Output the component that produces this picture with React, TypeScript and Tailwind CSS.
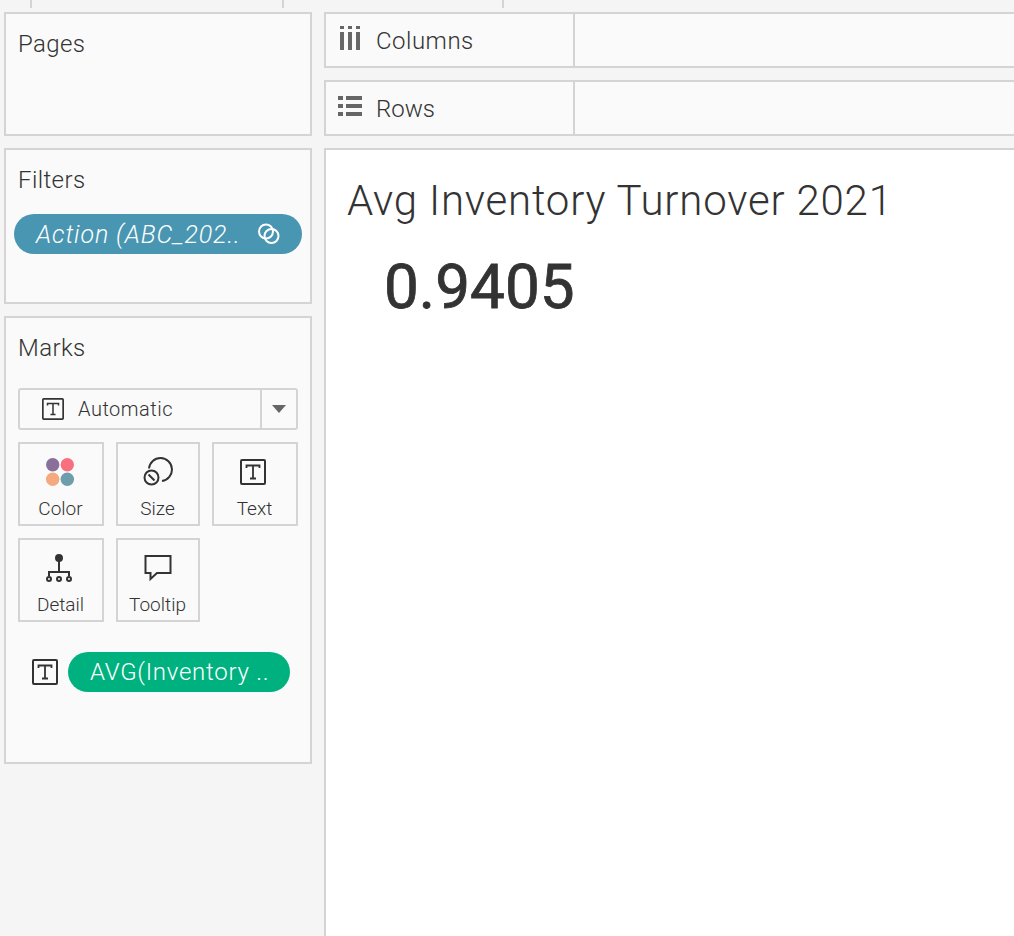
import React from 'react';

const sans = "font-['Roboto','Open_Sans',sans-serif]";

const TextIcon = ({ size = 26, className = '' }: { size?: number; className?: string }) => (
  <svg width={size} height={size} viewBox="0 0 26 26" fill="none" className={className}>
    <rect x="1" y="1" width="24" height="24" rx="1" stroke="#333" strokeWidth="2" />
    <path d="M6.500 9V6.500h13V9M13 7v12.500M10 19.500h6" stroke="#333" strokeWidth="1.800" />
  </svg>
);

const MarkButton = ({ label, icon }: { label: string; icon: React.ReactNode }) => (
  <div className="flex h-[84px] w-full flex-col items-center border-2 border-[#d4d4d4] bg-[#fafafa]">
    <div className="flex h-[52px] w-full items-center justify-center pt-[4px]">{icon}</div>
    <span className="-ml-[1px] mt-[1px] text-[19px] font-light leading-[24px] text-[#333]">{label}</span>
  </div>
);

export default function App() {
  return (
    <div className={`${sans} h-[936px] w-[1014px] overflow-hidden bg-[#f5f5f5] text-[#333]`}>
      <div className="flex h-[12px] items-start">
        <div className="ml-[30px] h-[8px] w-[2px] bg-[#d4d4d4]" />
        <div className="ml-[250px] h-[8px] w-[2px] bg-[#d4d4d4]" />
        <div className="ml-[218px] h-[8px] w-[2px] bg-[#d4d4d4]" />
      </div>

      <div className="flex gap-[12px] pl-[4px]">
        <div className="flex w-[308px] flex-col gap-[12px]">
          <section className="h-[124px] border-2 border-[#d4d4d4] bg-[#fafafa] pl-[12px] pt-[14px] text-[24px] font-light leading-[32px] tracking-[0.4px]">
            Pages
          </section>

          <section className="h-[156px] border-2 border-[#d4d4d4] bg-[#fafafa] pt-[14px]">
            <div className="pl-[12px] text-[24px] font-light leading-[32px] tracking-[0.4px]">Filters</div>
            <div className="ml-[8px] mt-[18px] flex h-[40px] w-[288px] items-center rounded-full bg-[#4996b2] pl-[22px] text-white">
              <span className="text-[25px] font-light italic leading-none tracking-[0.88px]">Action (ABC_202..</span>
              <svg width="24" height="24" viewBox="0 0 24 24" fill="none" className="ml-auto mr-[21px]">
                <circle cx="9" cy="9.500" r="7" stroke="#fff" strokeWidth="2" />
                <circle cx="14.500" cy="14" r="7" stroke="#fff" strokeWidth="2" />
              </svg>
            </div>
          </section>

          <section className="h-[448px] border-2 border-[#d4d4d4] bg-[#fafafa] pt-[14px]">
            <div className="pl-[12px] text-[24px] font-light leading-[32px] tracking-[0.4px]">Marks</div>
            <div className="ml-[12px] mt-[24px] flex h-[42px] w-[280px] items-center rounded-[3px] border-2 border-[#d4d4d4]">
              <TextIcon size={22} className="ml-[22px]" />
              <span className="ml-[14px] flex-1 text-[20px] font-light leading-none tracking-[0.5px]">Automatic</span>
              <div className="flex h-full w-[36px] items-center justify-center border-l-2 border-[#d4d4d4]">
                <div className="h-0 w-0 border-x-[7px] border-t-[8px] border-x-transparent border-t-[#666]" />
              </div>
            </div>

            <div className="ml-[12px] mt-[12px] grid w-[280px] grid-cols-[86px_84px_86px] gap-[12px]">
              <MarkButton
                label="Color"
                icon={
                  <svg width="30" height="30" viewBox="0 0 30 30" className="-ml-[2px]">
                    <circle cx="7.700" cy="7.700" r="6.700" fill="#8b6f9b" />
                    <circle cx="22.300" cy="7.700" r="6.700" fill="#f8707f" />
                    <circle cx="7.700" cy="22.300" r="6.700" fill="#f4a97f" />
                    <circle cx="22.300" cy="22.300" r="6.700" fill="#6e9dab" />
                  </svg>
                }
              />
              <MarkButton
                label="Size"
                icon={
                  <svg width="30" height="30" viewBox="0 0 30 30" fill="none" stroke="#333" strokeWidth="2">
                    <path d="M6 11.500A11.500 11.500 0 1 1 19 24" />
                    <circle cx="8.500" cy="20.500" r="7" />
                    <path d="M5.500 17.500l6 6" />
                  </svg>
                }
              />
              <MarkButton label="Text" icon={<TextIcon className="-ml-[4px]" />} />
              <MarkButton
                label="Detail"
                icon={
                  <svg width="28" height="30" viewBox="0 0 28 30" fill="none" stroke="#333" strokeWidth="2" className="-ml-[4px] mt-[2px]">
                    <circle cx="14" cy="4" r="3" fill="#333" />
                    <path d="M14 7v11M4 22v-4h20v4" />
                    <circle cx="4" cy="25" r="2" />
                    <circle cx="14" cy="25" r="2" />
                    <circle cx="24" cy="25" r="2" />
                  </svg>
                }
              />
              <MarkButton
                label="Tooltip"
                icon={
                  <svg width="30" height="28" viewBox="0 0 30 28" fill="none" stroke="#333" strokeWidth="2">
                    <path d="M2.500 2h25v17H14l-6.500 6v-6h-5z" />
                  </svg>
                }
              />
            </div>

            <div className="ml-[26px] mt-[30px] flex items-center gap-[10px]">
              <TextIcon />
              <div className="flex h-[40px] w-[222px] items-center rounded-full bg-[#00b180] pl-[22px] text-[24px] font-light leading-none tracking-[0.75px] text-white">
                AVG(Inventory ..
              </div>
            </div>
          </section>
        </div>

        <div className="flex flex-1 flex-col gap-[12px]">
          <div className="flex h-[56px] border-y-2 border-l-2 border-[#d4d4d4] bg-[#fafafa]">
            <div className="flex w-[249px] items-center border-r-2 border-[#d4d4d4] pl-[14px]">
              <svg width="20" height="24" viewBox="0 0 20 24" fill="#666" className="-mt-[4px]">
                <path d="M0 0h4v3H0zM8 0h4v3H8zM16 0h4v3h-4zM0 6h4v18H0zM8 6h4v18H8zM16 6h4v18h-4z" />
              </svg>
              <span className="ml-[16px] mt-[2px] text-[24px] font-light leading-none tracking-[0.5px]">Columns</span>
            </div>
          </div>
          <div className="flex h-[56px] border-y-2 border-l-2 border-[#d4d4d4] bg-[#fafafa]">
            <div className="flex w-[249px] items-center border-r-2 border-[#d4d4d4] pl-[12px]">
              <svg width="24" height="20" viewBox="0 0 24 20" fill="#666" className="-mt-[4px]">
                <path d="M0 0h5v4H0zM8 0h16v4H8zM0 8h5v4H0zM8 8h16v4H8zM0 16h5v4H0zM8 16h16v4H8z" />
              </svg>
              <span className="ml-[14px] mt-[2px] text-[24px] font-light leading-none">Rows</span>
            </div>
          </div>
          <main className="h-[800px] border-l-2 border-t-2 border-[#d4d4d4] bg-white pl-[21px] pt-[27px]">
            <h1 className="text-[42px] font-light leading-[48px] tracking-[0.8px]">Avg Inventory Turnover 2021</h1>
            <div className="ml-[37px] mt-[29px] text-[62px] font-normal leading-[66px] [-webkit-text-stroke:0.8px_#333]">0.9405</div>
          </main>
        </div>
      </div>
    </div>
  );
}
